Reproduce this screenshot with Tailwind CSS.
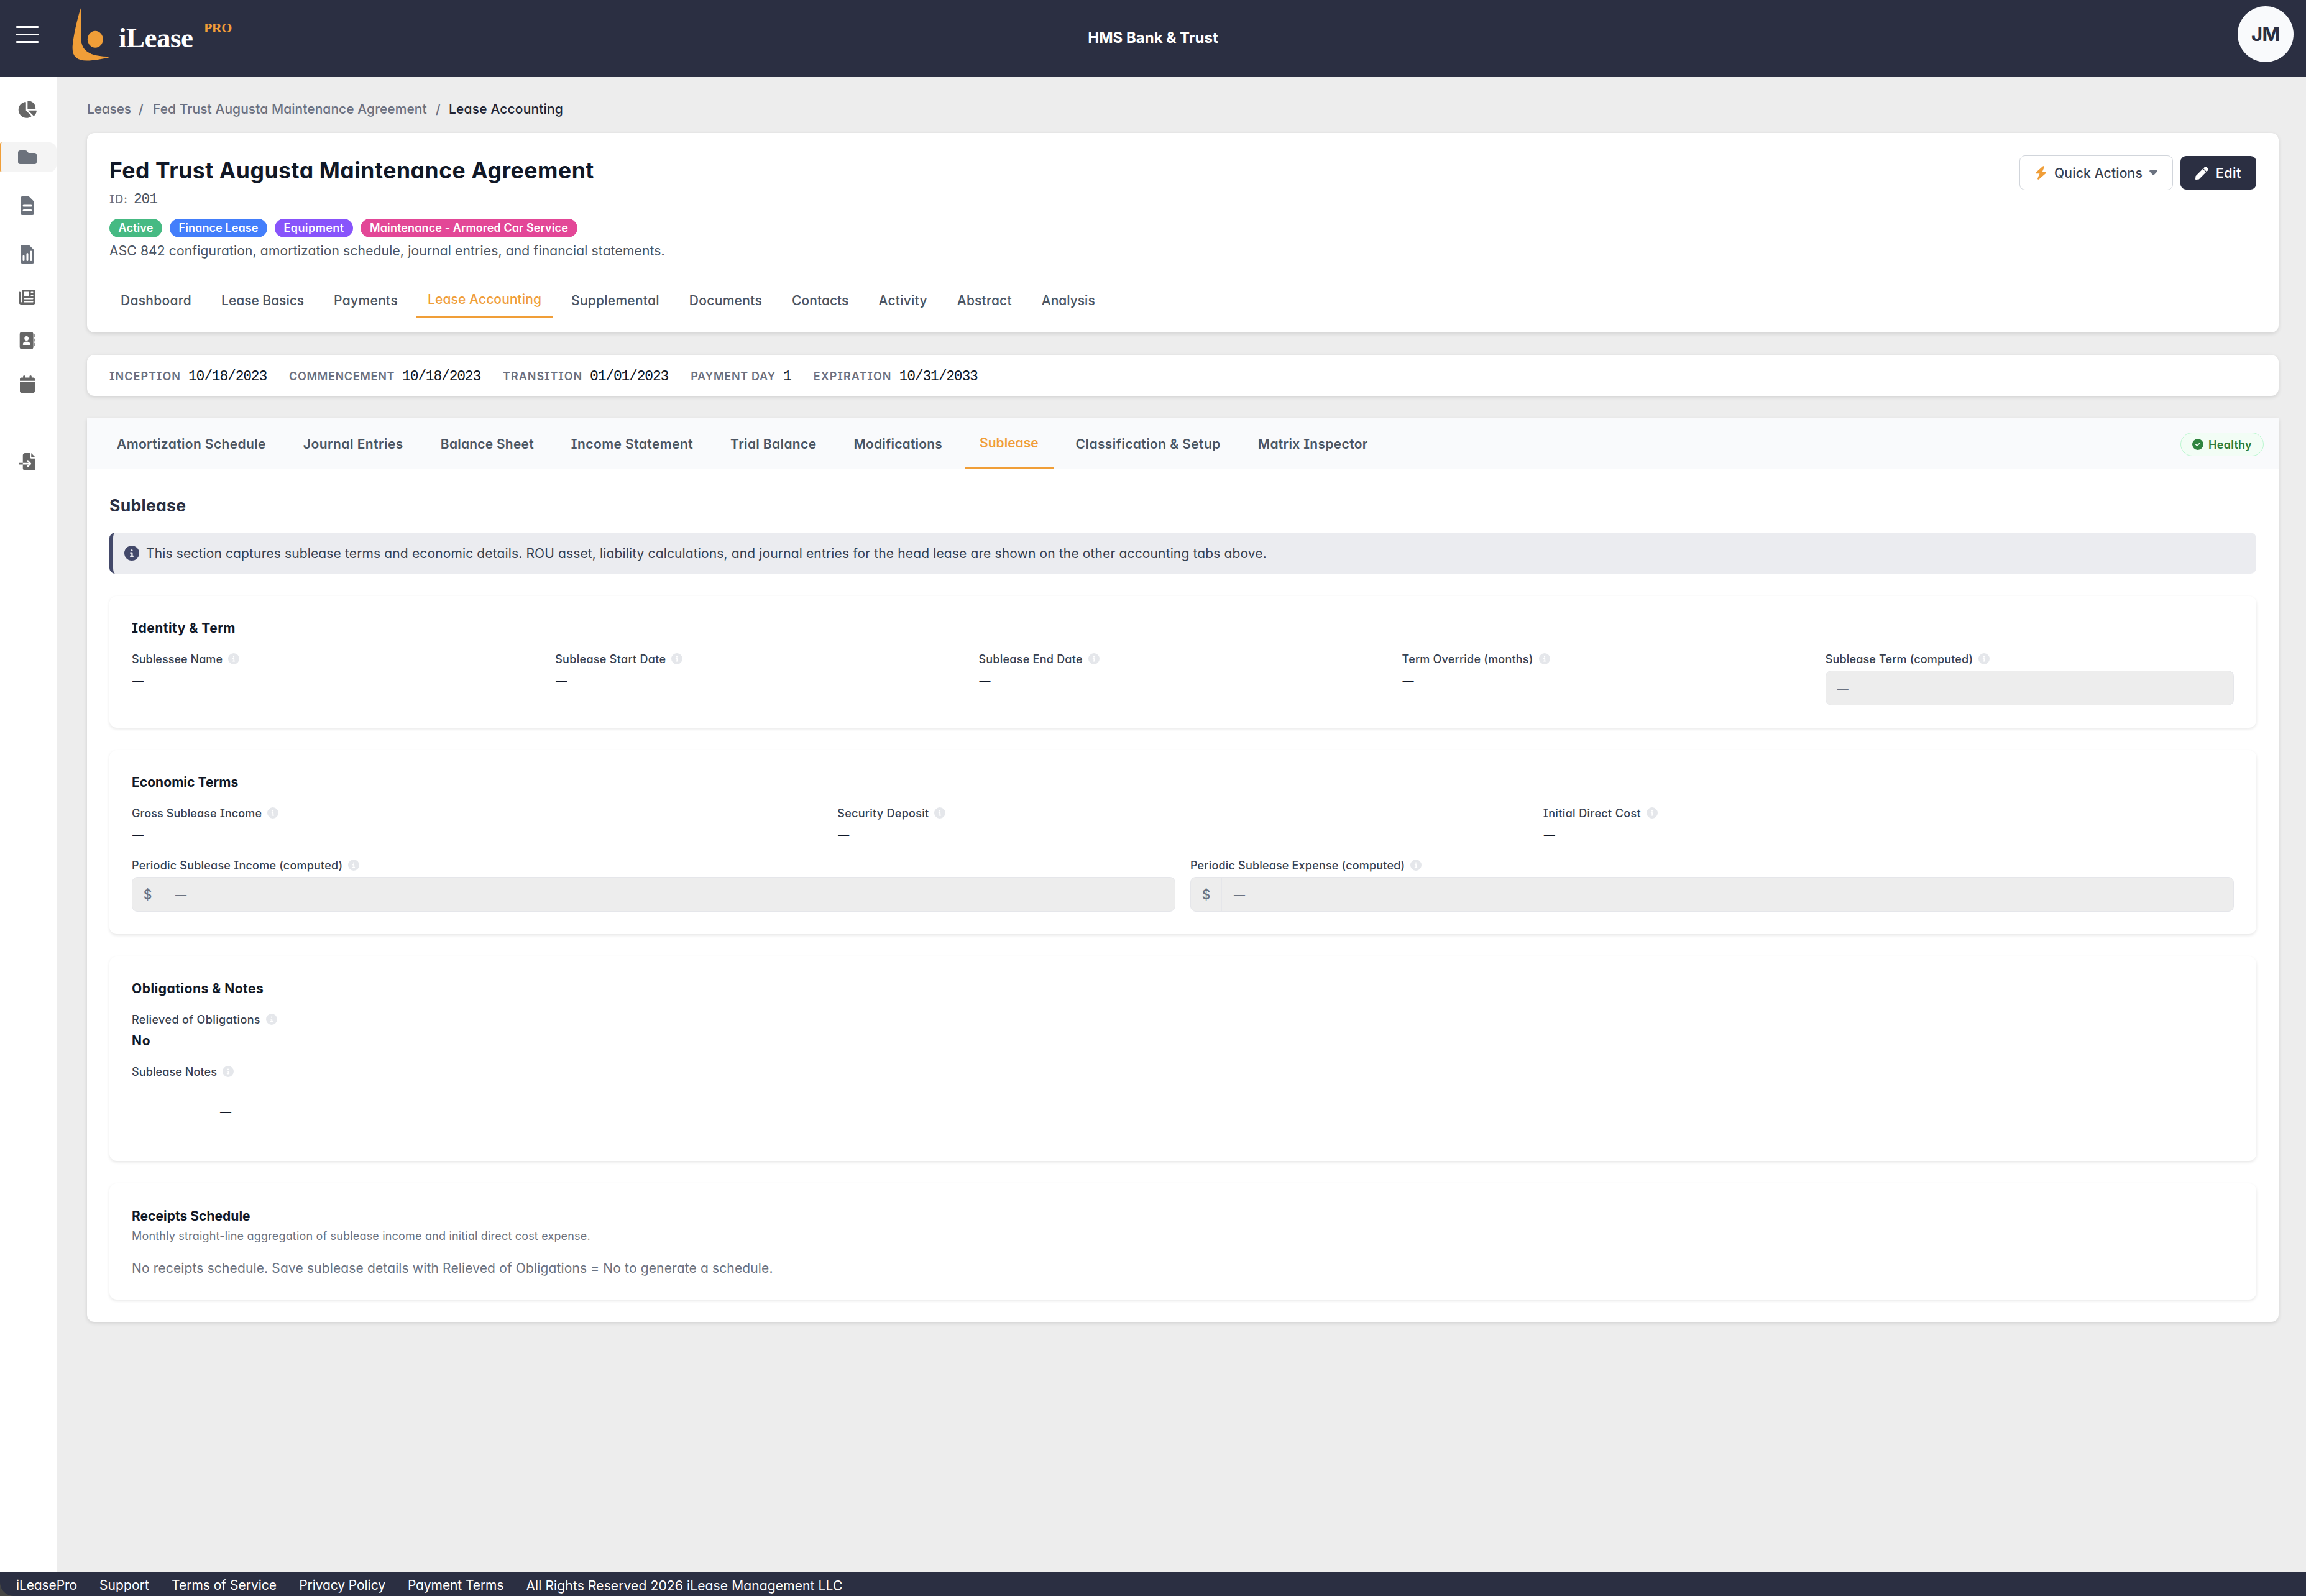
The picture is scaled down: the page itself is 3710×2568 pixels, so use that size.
<!DOCTYPE html>
<html lang="en">
<head>
<meta charset="utf-8">
<title>iLease Pro</title>
<script src="https://cdn.jsdelivr.net/npm/@tailwindcss/browser@4"></script>
</head>
<body class="bg-[#ededed] font-['Inter',sans-serif] [font-feature-settings:'cv11','cv08'] text-[21px] font-medium w-[3710px] h-[2568px] overflow-hidden whitespace-nowrap flex flex-col">
<svg class="hidden">
  <symbol id="info" viewBox="0 0 512 512"><path d="M256 512A256 256 0 1 0 256 0a256 256 0 1 0 0 512zM216 336h24V272H216c-13.3 0-24-10.7-24-24s10.7-24 24-24h48c13.3 0 24 10.7 24 24v88h8c13.3 0 24 10.7 24 24s-10.7 24-24 24H216c-13.3 0-24-10.7-24-24s10.7-24 24-24zm40-208a32 32 0 1 1 0 64 32 32 0 1 1 0-64z"/></symbol>
</svg>

<header class="h-[124px] shrink-0 bg-[#2b2f42] flex items-start">
  <div class="flex-1 flex items-start">
    <svg class="ml-[26px] mt-[42px] w-9 h-7" viewBox="0 0 36 28" fill="#fff"><rect width="36" height="3" rx="1"/><rect y="12" width="36" height="3" rx="1"/><rect y="24" width="36" height="3" rx="1"/></svg>
    <svg class="ml-[54px] mt-3 w-[64px] h-[86px]" viewBox="348 36 193 258" fill="#f09e38"><path d="M391 37V180C391 245 430 275 540 274C500 285 450 293 420 293C375 293 350 275 350 235C350 190 375 80 391 37Z"/><ellipse cx="460.500" cy="190" rx="37.500" ry="40.500"/></svg>
    <div class="ml-[11px] mt-[36px] w-[121px] h-[50px] leading-[50px] text-[45px] font-bold text-white font-['Liberation_Serif',serif] tracking-[-0.5px]">iLease</div>
    <div class="ml-[16px] mt-[33px] h-6 leading-6 text-[22px] font-bold text-[#f09e38] font-['Liberation_Serif',serif] tracking-[-0.6px]">PRO</div>
  </div>
  <div class="mt-[41px] h-10 leading-10 text-[24px] font-bold text-white [font-feature-settings:normal]">HMS Bank &amp; Trust</div>
  <div class="flex-1 flex justify-end">
    <div class="mt-[10px] mr-5 size-[90px] rounded-full bg-[#f9fafc] text-[#2b2f42] text-[31px] font-bold flex items-center justify-center [font-feature-settings:normal] tracking-[-0.5px]">JM</div>
  </div>
</header>

<div class="flex flex-1 min-h-0">
  <aside class="w-[92px] shrink-0 bg-white border-r border-[#e5e5e5] fill-[#666]">
    <div class="h-[105px] pt-[38px] pl-[28px]"><svg class="w-[31px] h-7" viewBox="0 0 576 512"><path d="M304 240V16.600c0-9 7-16.600 16-16.600C443.700 0 544 100.300 544 224c0 9-7.600 16-16.600 16H304zM32 272C32 150.700 122.100 50.300 239 34.300c9.200-1.300 17 6.100 17 15.400V288L412.500 444.500c6.700 6.700 6.200 17.700-1.500 23.100C371.800 495.600 323.800 512 272 512C139.500 512 32 404.600 32 272zm526.400 16c9.300 0 16.600 7.800 15.400 17c-7.700 55.900-34.600 105.600-73.900 142.300c-6 5.600-15.400 5.200-21.200-.7L320 288H558.400z"/></svg></div>
    <div class="h-[48px] rounded-r-xl rounded-l-[3px] bg-[#f4f4f4] border-l-2 border-[#f09e38] pt-[13px] pl-[27px]"><svg class="w-[30px] h-[22px] fill-[#6c727c]" viewBox="0 0 30 22"><path d="M3.500 0H12C13.500 0 14 .8 14.800 1.800L16 3.200C16.500 3.700 17 4 18 4H26.500A3.500 3.500 0 0 1 30 7.500V18.500A3.500 3.500 0 0 1 26.500 22H3.500A3.500 3.500 0 0 1 0 18.500V3.500A3.500 3.500 0 0 1 3.500 0Z"/></svg></div>
    <div class="mt-[39px] pl-[33px] flex flex-col fill-[#6c727c]">
      <svg class="w-[22px] h-[30px]" viewBox="0 0 22 30"><path fill-rule="evenodd" d="M3 0H13.500L22 8.500V27A3 3 0 0 1 19 30H3A3 3 0 0 1 0 27V3A3 3 0 0 1 3 0ZM5 13.500A1.500 1.500 0 0 0 5 16.500H17A1.500 1.500 0 0 0 17 13.500ZM5 21A1.500 1.500 0 0 0 5 24H17A1.500 1.500 0 0 0 17 21Z"/></svg>
      <svg class="mt-[48px] w-[22px] h-[30px]" viewBox="0 0 22 30"><path d="M3 0H13.500L22 8.500V27A3 3 0 0 1 19 30H3A3 3 0 0 1 0 27V3A3 3 0 0 1 3 0Z"/><path d="M5 18V24.500M11 14.500V24.500M17 11V24.500" stroke="#fff" stroke-width="3" stroke-linecap="round"/></svg>
    </div>
    <svg class="mt-[42px] ml-[30px] w-[27px] h-[24px]" viewBox="0 32 512 448" preserveAspectRatio="none"><path d="M96 96c0-35.300 28.700-64 64-64H448c35.300 0 64 28.700 64 64V416c0 35.300-28.700 64-64 64H80c-44.200 0-80-35.800-80-80V128c0-17.700 14.300-32 32-32s32 14.300 32 32V400c0 8.800 7.200 16 16 16s16-7.200 16-16V96zm64 24v80c0 13.300 10.700 24 24 24H296c13.300 0 24-10.700 24-24V120c0-13.300-10.700-24-24-24H184c-13.300 0-24 10.700-24 24zm208-8c0 8.800 7.200 16 16 16h48c8.800 0 16-7.200 16-16s-7.200-16-16-16H384c-8.800 0-16 7.200-16 16zm0 96c0 8.800 7.200 16 16 16h48c8.800 0 16-7.200 16-16s-7.200-16-16-16H384c-8.800 0-16 7.200-16 16zM160 304c0 8.800 7.200 16 16 16H432c8.800 0 16-7.200 16-16s-7.200-16-16-16H176c-8.800 0-16 7.200-16 16zm0 96c0 8.800 7.200 16 16 16H432c8.800 0 16-7.200 16-16s-7.200-16-16-16H176c-8.800 0-16 7.200-16 16z"/></svg>
    <svg class="mt-[44px] ml-[30px] w-[27px] h-[28px]" viewBox="0 0 512 512" preserveAspectRatio="none"><path d="M96 0C60.700 0 32 28.700 32 64V448c0 35.300 28.700 64 64 64H384c35.300 0 64-28.700 64-64V64c0-35.300-28.700-64-64-64H96zM208 288h64c44.200 0 80 35.800 80 80c0 8.800-7.200 16-16 16H144c-8.800 0-16-7.200-16-16c0-44.200 35.800-80 80-80zm-32-96a64 64 0 1 1 128 0 64 64 0 1 1 -128 0zM512 80c0-8.800-7.200-16-16-16s-16 7.200-16 16v64c0 8.800 7.200 16 16 16s16-7.200 16-16V80zM496 192c-8.800 0-16 7.200-16 16v64c0 8.800 7.200 16 16 16s16-7.200 16-16V208c0-8.800-7.200-16-16-16zm16 144c0-8.800-7.200-16-16-16s-16 7.200-16 16v64c0 8.800 7.200 16 16 16s16-7.200 16-16V336z"/></svg>
    <svg class="mt-[42px] ml-[32px] w-[24px] h-[28px]" viewBox="0 0 448 512" preserveAspectRatio="none"><path d="M96 32V64H48C21.500 64 0 85.500 0 112v48H448V112c0-26.500-21.500-48-48-48H352V32c0-17.700-14.300-32-32-32s-32 14.300-32 32V64H160V32c0-17.700-14.300-32-32-32S96 14.300 96 32zM448 192H0V464c0 26.500 21.500 48 48 48H400c26.500 0 48-21.500 48-48V192z"/></svg>
    <div class="mt-[58px] h-[107px] border-y border-[#e2e2e2] pt-[38px] pl-[30px]"><svg class="w-[27px] h-[28px]" viewBox="0 0 512 512" preserveAspectRatio="none"><path d="M128 64c0-35.300 28.700-64 64-64H352V128c0 17.700 14.300 32 32 32H512V448c0 35.300-28.700 64-64 64H192c-35.300 0-64-28.700-64-64V336H302.100l-39 39c-9.400 9.400-9.400 24.600 0 33.900s24.600 9.400 33.900 0l80-80c9.400-9.400 9.400-24.600 0-33.900l-80-80c-9.400-9.400-24.600-9.400-33.900 0s-9.400 24.600 0 33.900l39 39H128V64zm0 224v48H24c-13.300 0-24-10.700-24-24s10.700-24 24-24H128zM512 128H384V0L512 128z"/></svg></div>
  </aside>

  <main class="flex-1 pl-[48px] pr-[44px] pt-[40px]">
    <nav class="h-6 leading-6 flex text-[#6b7080]">
      <span class="w-[83px] tracking-[-0.2px]">Leases</span><span class="w-[23px]">/</span>
      <span class="w-[455px] tracking-[0.06px]">Fed Trust Augusta Maintenance Agreement</span><span class="w-[21px]">/</span>
      <span class="text-[#1f2433] tracking-[0.16px]">Lease Accounting</span>
    </nav>

    <section class="mt-[26px] h-[321px] bg-white rounded-xl shadow-[0_2px_6px_rgba(0,0,0,0.12)] px-9 pt-9 flex justify-between">
      <div>
        <h1 class="h-12 leading-[50px] text-[35.5px] font-bold text-[#111827] tracking-[0.55px]">Fed Trust Augusta Maintenance Agreement</h1>
        <div class="mt-[8px] h-[30px] leading-[30px] flex text-[#6b7280]"><span class="w-[39px] text-[18px] tracking-[1.1px]">ID:</span><span class="text-[23px] font-normal text-[#4b5563] font-['Liberation_Mono',monospace] tracking-[-1.2px]">201</span></div>
        <div class="mt-[16px] flex gap-3 text-[18px] font-semibold text-white leading-[30px] h-[30px]">
          <span class="w-[85px] text-center rounded-full bg-[#46ba83] tracking-[0.12px]">Active</span>
          <span class="w-[157px] text-center rounded-full bg-[#437efb] tracking-[0.09px]">Finance Lease</span>
          <span class="w-[126px] text-center rounded-full bg-[#8854fb] tracking-[0.41px]">Equipment</span>
          <span class="w-[349px] text-center rounded-full bg-[#e34797] tracking-[0.11px]">Maintenance - Armored Car Service</span>
        </div>
        <p class="mt-[6px] h-8 leading-8 font-normal text-[#4b5563] tracking-[0.17px]">ASC 842 configuration, amortization schedule, journal entries, and financial statements.</p>
        <nav class="mt-[36px] h-[55px] flex gap-3 text-[#4b5563] leading-[55px] *:px-[18px]">
          <a class="tracking-[0.29px]">Dashboard</a><a class="tracking-[-0.02px]">Lease Basics</a><a class="tracking-[0.34px]">Payments</a>
          <a class="text-[#f09e38] border-b-[3px] border-[#f09e38] leading-[52px] tracking-[0.1px]">Lease Accounting</a>
          <a class="tracking-[0.26px]">Supplemental</a><a class="tracking-[0.3px]">Documents</a><a class="tracking-[0.05px]">Contacts</a><a class="tracking-[0.25px]">Activity</a><a class="tracking-[0.21px]">Abstract</a><a>Analysis</a>
        </nav>
      </div>
      <div class="flex gap-3">
        <div class="w-[247px] h-14 border border-[#d1d5db] rounded-[9px] flex items-center text-[#374151] leading-[56px]">
          <svg class="ml-[24px] w-[19px] h-[22px] fill-[#f09e38]" viewBox="0 0 448 512"><path d="M349.400 44.600c5.900-13.700 1.500-29.700-10.600-38.500s-28.600-8-39.900 1.800l-256 224c-10 8.800-13.600 22.900-8.900 35.300S50.700 288 64 288H175.500L98.600 467.400c-5.900 13.700-1.500 29.700 10.600 38.500s28.600 8 39.900-1.800l256-224c10-8.800 13.600-22.900 8.900-35.300s-16.600-20.700-30-20.700H272.500L349.400 44.600z"/></svg>
          <span class="ml-[12px] w-[142px] h-[54px] tracking-[0.19px]">Quick Actions</span>
          <svg class="ml-[11px] w-[13px] h-2 fill-[#6b7280]" viewBox="0 0 13 8"><path d="M1 0H12Q13.500 .8 12.500 2L7.500 7.300Q6.500 8.300 5.500 7.300L.5 2Q-.5 .8 1 0Z"/></svg>
        </div>
        <div class="mt-px w-[122px] h-[54px] bg-[#2b2f42] rounded-[9px] flex items-center text-white font-semibold leading-[56px]">
          <svg class="ml-[24px] size-[21px]" viewBox="0 0 512 512" fill="#fff"><path d="M290.740 93.240l128.020 128.020-277.990 277.990-114.140 12.600C11.350 513.540-1.560 500.620.14 485.340l12.700-114.220 277.900-277.880zm207.200-19.060l-60.110-60.110c-18.750-18.750-49.160-18.750-67.910 0l-56.550 56.550 128.020 128.020 56.550-56.550c18.750-18.760 18.750-49.160 0-67.910z"/></svg>
          <span class="ml-[12px] h-[54px] tracking-[0.57px]">Edit</span>
        </div>
      </div>
    </section>

    <section class="mt-9 h-[66px] pt-[3px] bg-white rounded-xl shadow-[0_2px_6px_rgba(0,0,0,0.12)] px-9 flex items-center gap-9 text-[18px] font-semibold text-[#6b7080] leading-6">
      <div class="flex gap-3"><span class="tracking-[1.05px]">INCEPTION</span><span class="text-[23px] font-normal text-[#111827] font-['Liberation_Mono',monospace] tracking-[-1.2px]">10/18/2023</span></div>
      <div class="flex gap-3"><span class="tracking-[0.66px]">COMMENCEMENT</span><span class="text-[23px] font-normal text-[#111827] font-['Liberation_Mono',monospace] tracking-[-1.2px]">10/18/2023</span></div>
      <div class="flex gap-3"><span class="tracking-[0.98px]">TRANSITION</span><span class="text-[23px] font-normal text-[#111827] font-['Liberation_Mono',monospace] tracking-[-1.2px]">01/01/2023</span></div>
      <div class="flex gap-3"><span class="tracking-[0.71px]">PAYMENT DAY</span><span class="text-[23px] font-normal text-[#111827] font-['Liberation_Mono',monospace] tracking-[-1.2px]">1</span></div>
      <div class="flex gap-3"><span class="tracking-[1.11px]">EXPIRATION</span><span class="text-[23px] font-normal text-[#111827] font-['Liberation_Mono',monospace] tracking-[-1.2px]">10/31/2033</span></div>
    </section>

    <section class="mt-9 h-[1454px] bg-white rounded-b-xl shadow-[0_2px_6px_rgba(0,0,0,0.12)]">
      <div class="h-[82px] pt-px bg-[#f9fafc] border-b border-[#e2e5ea] px-6 flex justify-between items-center">
        <nav class="h-20 flex gap-3 font-semibold text-[#4b5563] leading-[82px] *:px-6">
          <a class="tracking-[0.37px]">Amortization Schedule</a><a class="tracking-[0.46px]">Journal Entries</a><a class="tracking-[0.22px]">Balance Sheet</a><a class="tracking-[0.43px]">Income Statement</a><a class="tracking-[0.36px]">Trial Balance</a><a class="tracking-[0.2px]">Modifications</a>
          <a class="text-[#f09e38] border-b-[3px] border-[#f09e38] leading-[78px]">Sublease</a>
          <a class="tracking-[0.4px]">Classification &amp; Setup</a><a class="tracking-[0.34px]">Matrix Inspector</a>
        </nav>
        <div class="w-[134px] h-[38px] mt-[2px] rounded-full border border-[#bbf7d0] bg-[#f2fdf5] text-[#2f7d3b] text-[18px] font-semibold flex items-center justify-center gap-2">
          <svg class="size-[18px] fill-[#2f8440]" viewBox="0 0 512 512"><path d="M256 512A256 256 0 1 0 256 0a256 256 0 1 0 0 512zM369 209L241 337c-9.400 9.400-24.600 9.400-33.900 0l-64-64c-9.400-9.400-9.400-24.600 0-33.900s24.600-9.400 33.900 0l47 47L335 175c9.400-9.400 24.600-9.400 33.900 0s9.400 24.600 0 33.900z"/></svg><span class="tracking-[0.29px]">Healthy</span>
        </div>
      </div>

      <div class="px-9 pt-[35px]">
        <h2 class="h-[46px] leading-[46px] text-[26.5px] font-bold text-[#2b2f42] tracking-[0.3px]">Sublease</h2>
        <div class="mt-[21px] h-[66px] bg-[#ebecf0] border-l-[6px] border-[#43496a] rounded-[9px] flex items-center pl-[18px] font-normal text-[#374151]">
          <svg class="size-6 fill-[#43496a]"><use href="#info"/></svg><span class="ml-[11px] pt-[2px] tracking-[0.135px]">This section captures sublease terms and economic details. ROU asset, liability calculations, and journal entries for the head lease are shown on the other accounting tabs above.</span>
        </div>

        <div class="mt-9 h-[212px] rounded-xl shadow-[0_2px_5px_rgba(0,0,0,0.1)] bg-white px-9 pt-[38px]">
          <h3 class="h-[27px] leading-[27px] font-bold text-[#111827] tracking-[0.48px]">Identity &amp; Term</h3>
          <div class="mt-6 grid grid-cols-5 gap-6 text-[18px] text-[#374151] leading-[26px]">
            <div><div class="h-6 flex gap-[9px]"><span class="tracking-[0.05px]">Sublessee Name</span><svg class="mt-[3px] size-[18px] fill-[#e5e7eb]"><use href="#info"/></svg></div><div class="mt-[10px] h-[26px] leading-[26px] pl-px font-bold text-[#111827]">—</div></div>
            <div><div class="h-6 flex gap-[9px]"><span class="tracking-[0.3px]">Sublease Start Date</span><svg class="mt-[3px] size-[18px] fill-[#e5e7eb]"><use href="#info"/></svg></div><div class="mt-[10px] h-[26px] leading-[26px] pl-px font-bold text-[#111827]">—</div></div>
            <div><div class="h-6 flex gap-[9px]"><span class="tracking-[0.25px]">Sublease End Date</span><svg class="mt-[3px] size-[18px] fill-[#e5e7eb]"><use href="#info"/></svg></div><div class="mt-[10px] h-[26px] leading-[26px] pl-px font-bold text-[#111827]">—</div></div>
            <div><div class="h-6 flex gap-[9px]"><span class="tracking-[0.21px]">Term Override (months)</span><svg class="mt-[3px] size-[18px] fill-[#e5e7eb]"><use href="#info"/></svg></div><div class="mt-[10px] h-[26px] leading-[26px] pl-px font-bold text-[#111827]">—</div></div>
            <div><div class="h-6 flex gap-[9px]"><span class="tracking-[0.15px]">Sublease Term (computed)</span><svg class="mt-[3px] size-[18px] fill-[#e5e7eb]"><use href="#info"/></svg></div><div class="mt-[7px] h-14 leading-[57px] pl-[18px] rounded-[9px] border border-[#e5e6ea] bg-[#ededed] font-semibold text-[#6b7280]">—</div></div>
          </div>
        </div>

        <div class="mt-9 h-[296px] rounded-xl shadow-[0_2px_5px_rgba(0,0,0,0.1)] bg-white px-9 pt-[38px] text-[18px] text-[#374151] leading-[26px]">
          <h3 class="h-[27px] leading-[27px] text-[21px] font-bold text-[#111827] tracking-[0.04px]">Economic Terms</h3>
          <div class="mt-6 grid grid-cols-3 gap-6">
            <div><div class="h-6 flex gap-[9px]"><span class="tracking-[0.11px]">Gross Sublease Income</span><svg class="mt-[3px] size-[18px] fill-[#e5e7eb]"><use href="#info"/></svg></div><div class="mt-[10px] h-[26px] leading-[26px] pl-px font-bold text-[#111827]">—</div></div>
            <div><div class="h-6 flex gap-[9px]"><span class="tracking-[0.27px]">Security Deposit</span><svg class="mt-[3px] size-[18px] fill-[#e5e7eb]"><use href="#info"/></svg></div><div class="mt-[10px] h-[26px] leading-[26px] pl-px font-bold text-[#111827]">—</div></div>
            <div><div class="h-6 flex gap-[9px]"><span class="tracking-[0.36px]">Initial Direct Cost</span><svg class="mt-[3px] size-[18px] fill-[#e5e7eb]"><use href="#info"/></svg></div><div class="mt-[10px] h-[26px] leading-[26px] pl-px font-bold text-[#111827]">—</div></div>
          </div>
          <div class="mt-6 grid grid-cols-2 gap-6">
            <div><div class="h-6 flex gap-[9px]"><span class="tracking-[0.21px]">Periodic Sublease Income (computed)</span><svg class="mt-[3px] size-[18px] fill-[#e5e7eb]"><use href="#info"/></svg></div><div class="mt-[7px] h-14 leading-[56px] rounded-[9px] border border-[#e5e6ea] bg-[#ededed] text-[#6b7280] flex"><span class="w-[50px] h-[54px] text-center text-[21px] border-r border-[#e5e6ea]">$</span><span class="pl-[19px] font-semibold">—</span></div></div>
            <div><div class="h-6 flex gap-[9px]"><span class="tracking-[0.18px]">Periodic Sublease Expense (computed)</span><svg class="mt-[3px] size-[18px] fill-[#e5e7eb]"><use href="#info"/></svg></div><div class="mt-[7px] h-14 leading-[56px] rounded-[9px] border border-[#e5e6ea] bg-[#ededed] text-[#6b7280] flex"><span class="w-[50px] h-[54px] text-center text-[21px] border-r border-[#e5e6ea]">$</span><span class="pl-[19px] font-semibold">—</span></div></div>
          </div>
        </div>

        <div class="mt-9 h-[329px] rounded-xl shadow-[0_2px_5px_rgba(0,0,0,0.1)] bg-white px-9 pt-[38px] text-[18px] text-[#374151] leading-[26px]">
          <h3 class="h-[27px] leading-[27px] text-[21px] font-bold text-[#111827] tracking-[0.48px]">Obligations &amp; Notes</h3>
          <div class="mt-6 h-6 flex gap-[9px]"><span class="tracking-[0.36px]">Relieved of Obligations</span><svg class="mt-[3px] size-[18px] fill-[#e5e7eb]"><use href="#info"/></svg></div>
          <div class="mt-[10px] h-[26px] leading-[26px] text-[21px] font-bold text-[#111827] tracking-[0.7px]">No</div>
          <div class="mt-6 h-6 flex gap-[9px]"><span class="tracking-[0.1px]">Sublease Notes</span><svg class="mt-[3px] size-[18px] fill-[#e5e7eb]"><use href="#info"/></svg></div>
          <div class="mt-[40px] pl-[142px] h-[26px] leading-[26px] font-bold text-[#111827]">—</div>
        </div>

        <div class="mt-9 h-[187px] rounded-xl shadow-[0_2px_5px_rgba(0,0,0,0.1)] bg-white px-9 pt-[39px] text-[#6b7280]">
          <h3 class="h-[27px] leading-[27px] font-bold text-[#111827] tracking-[0.02px]">Receipts Schedule</h3>
          <p class="mt-[7px] h-6 leading-6 text-[18px] font-normal tracking-[0.18px]">Monthly straight-line aggregation of sublease income and initial direct cost expense.</p>
          <p class="mt-[25px] h-[30px] leading-[30px] font-normal tracking-[0.14px]">No receipts schedule. Save sublease details with Relieved of Obligations = No to generate a schedule.</p>
        </div>
      </div>
    </section>
  </main>
</div>

<div class="shrink-0 bg-[#464644]">
  <footer class="h-[38px] rounded-bl-[22px] bg-[#2b2f42] text-white font-normal flex pl-[26px] gap-[36px] leading-[41px]">
    <span class="tracking-[-0.11px]">iLeasePro</span><span class="tracking-[0.1px]">Support</span><span>Terms of Service</span><span class="tracking-[-0.07px]">Privacy Policy</span><span class="tracking-[-0.09px]">Payment Terms</span><span class="leading-[43px] tracking-[0.13px]">All Rights Reserved 2026 iLease Management LLC</span>
  </footer>
</div>
</body>
</html>
